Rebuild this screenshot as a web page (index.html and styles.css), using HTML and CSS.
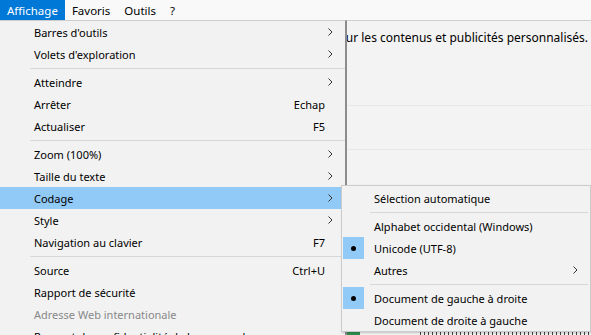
FILE: index.html
```html
<!DOCTYPE html>
<html lang="fr">
<head>
    <meta charset="UTF-8">
    <meta name="viewport" content="width=device-width, initial-scale=1.0">
    <title>Affichage - Codage</title>
    <link rel="stylesheet" href="styles.css">
</head>
<body>
    <!-- Menu bar -->
    <div class="menubar">
        <span class="menubar-item active">Affichage</span>
        <span class="menubar-item">Favoris</span>
        <span class="menubar-item">Outils</span>
        <span class="menubar-item">?</span>
    </div>

    <!-- Page behind the menus -->
    <div class="page">
        <div class="notice">Nous utilisons des cookies pour les contenus et publicités personnalisés.</div>
        <div class="row"></div>
        <div class="row"></div>
        <div class="spacer"></div>
        <div class="bottom-row"><span class="green-box"></span><span class="text-hint"></span></div>
    </div>

    <!-- Affichage dropdown -->
    <div class="menu main-menu">
        <div class="item"><span class="label">Barres d'outils</span><svg class="arrow" width="5" height="8" viewBox="0 0 5 8"><polyline points="0.5,0.5 4,4 0.5,7.5" /></svg></div>
        <div class="item"><span class="label">Volets d'exploration</span><svg class="arrow" width="5" height="8" viewBox="0 0 5 8"><polyline points="0.5,0.5 4,4 0.5,7.5" /></svg></div>
        <div class="sep"></div>
        <div class="item"><span class="label">Atteindre</span><svg class="arrow" width="5" height="8" viewBox="0 0 5 8"><polyline points="0.5,0.5 4,4 0.5,7.5" /></svg></div>
        <div class="item"><span class="label">Arrêter</span><span class="key">Echap</span></div>
        <div class="item"><span class="label">Actualiser</span><span class="key">F5</span></div>
        <div class="sep"></div>
        <div class="item"><span class="label">Zoom (100%)</span><svg class="arrow" width="5" height="8" viewBox="0 0 5 8"><polyline points="0.5,0.5 4,4 0.5,7.5" /></svg></div>
        <div class="item"><span class="label">Taille du texte</span><svg class="arrow" width="5" height="8" viewBox="0 0 5 8"><polyline points="0.5,0.5 4,4 0.5,7.5" /></svg></div>
        <div class="item selected"><span class="label">Codage</span><svg class="arrow" width="5" height="8" viewBox="0 0 5 8"><polyline points="0.5,0.5 4,4 0.5,7.5" /></svg></div>
        <div class="item"><span class="label">Style</span><svg class="arrow" width="5" height="8" viewBox="0 0 5 8"><polyline points="0.5,0.5 4,4 0.5,7.5" /></svg></div>
        <div class="item"><span class="label">Navigation au clavier</span><span class="key">F7</span></div>
        <div class="sep"></div>
        <div class="item"><span class="label">Source</span><span class="key">Ctrl+U</span></div>
        <div class="item"><span class="label">Rapport de sécurité</span></div>
        <div class="item disabled"><span class="label">Adresse Web internationale</span></div>
        <div class="item"><span class="label">Rapport de confidentialité de la page web</span></div>
    </div>

    <!-- Codage submenu -->
    <div class="menu sub-menu">
        <div class="item"><span class="label">Sélection automatique</span></div>
        <div class="sep"></div>
        <div class="item"><span class="label">Alphabet occidental (Windows)</span></div>
        <div class="item checked"><span class="check"><span class="dot"></span></span><span class="label">Unicode (UTF-8)</span></div>
        <div class="item"><span class="label">Autres</span><svg class="arrow" width="5" height="8" viewBox="0 0 5 8"><polyline points="0.5,0.5 4,4 0.5,7.5" /></svg></div>
        <div class="sep"></div>
        <div class="item checked"><span class="check"><span class="dot"></span></span><span class="label">Document de gauche à droite</span></div>
        <div class="item"><span class="label">Document de droite à gauche</span></div>
    </div>
</body>
</html>
```

FILE: styles.css
```css
body {
    margin: 0;
    width: 591px;
    height: 335px;
    overflow: hidden;
    position: relative;
    font-family: "Noto Sans", "Liberation Sans", sans-serif;
    font-size: 11px;
    color: #000;
    background-color: #f3f3f3;
}
.menubar {
    display: flex;
    height: 20px;
    background-color: #f9f9f9;
    font-size: 11.5px;
}
.menubar-item {
    display: flex;
    align-items: center;
    padding: 0 7px;
}
.menubar-item.active {
    background-color: #0078d7;
    color: #fff;
}
.page {
    display: flex;
    flex-direction: column;
    height: 314px;
    border-top: 1px solid #cfcfcf;
}
.notice {
    height: 84px;
    line-height: 34px;
    font-size: 12px;
    text-align: right;
    padding-right: 3px;
    border-bottom: 1px solid #e8e8e8;
    white-space: nowrap;
}
.row {
    height: 43px;
    border-bottom: 1px solid #e8e8e8;
}
.spacer {
    flex: 1;
}
.bottom-row {
    display: flex;
    align-items: flex-end;
    gap: 60px;
    height: 4px;
    padding-left: 343px;
}
.green-box {
    width: 17px;
    height: 4px;
    background-color: #2f8f4e;
}
.text-hint {
    flex: 1;
    height: 3px;
    background: repeating-linear-gradient(90deg, #444 0 1px, transparent 1px 4px);
}

/* Menus */
.menu {
    position: absolute;
    box-sizing: border-box;
    background-color: #f2f2f2;
    border: 1px solid #cccccc;
}
.main-menu {
    top: 20px;
    left: -1px;
    width: 348px;
    height: 330px;
    border-right: 2px solid #8c8c8c;
}
.sub-menu {
    top: 185px;
    left: 341px;
    width: 250px;
    padding: 1px 0 0;
    box-shadow: 1px 1px 2px rgba(0, 0, 0, 0.2);
}
.item {
    position: relative;
    display: flex;
    align-items: center;
    height: 22px;
    padding-left: 34px;
    white-space: nowrap;
}
.sub-menu .item {
    padding-left: 32px;
}
.item .label {
    flex: 1;
}
.item .key {
    margin-right: 20px;
}
.item .arrow {
    margin-right: 12px;
    fill: none;
    stroke: #333;
    stroke-width: 1;
}
.item.selected {
    background-color: #91c9f7;
}
.item.disabled {
    color: #888;
}
.check {
    position: absolute;
    left: 1px;
    top: 0;
    width: 21px;
    height: 22px;
    display: flex;
    align-items: center;
    justify-content: center;
    background-color: #91c9f7;
}
.dot {
    width: 5px;
    height: 5px;
    border-radius: 50%;
    background-color: #000;
}
.sep {
    height: 6px;
    display: flex;
    align-items: center;
    margin-left: 30px;
}
.sep::after {
    content: "";
    flex: 1;
    height: 1px;
    background-color: #d7d7d7;
}
.sub-menu .sep {
    margin-left: 28px;
    margin-right: 2px;
}
```
